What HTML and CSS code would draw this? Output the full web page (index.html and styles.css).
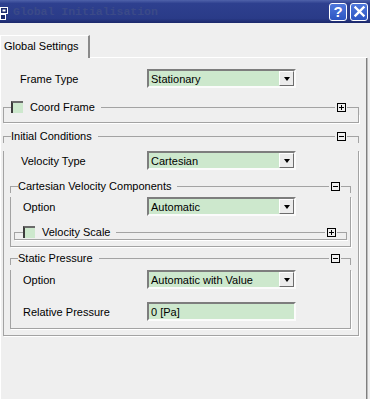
FILE: index.html
```html
<!DOCTYPE html>
<html lang="en">
<head>
  <meta charset="UTF-8">
  <title>Global Initialisation</title>
  <link rel="stylesheet" href="styles.css">
</head>
<body>
  <div class="window">
    <div class="titlebar">
      <svg class="app-icon" viewBox="0 0 10 16">
        <rect x="0.5" y="3.5" width="7" height="6" fill="#1c2a6b" stroke="#fff"/>
        <rect x="2.5" y="5.5" width="3" height="2" fill="#fff"/>
        <rect x="0.5" y="10.5" width="5" height="5" fill="#1c2a6b" stroke="#fff"/>
      </svg>
      <span class="title">Global Initialisation</span>
      <span class="tb-btn help">?</span>
      <span class="tb-btn">
        <svg viewBox="0 0 15 15" width="15" height="15">
          <path d="M3.5 3.5 L11.5 11.5 M11.5 3.5 L3.5 11.5" stroke="#fff" stroke-width="2.4" stroke-linecap="square"/>
        </svg>
      </span>
    </div>

    <div class="tabs">
      <div class="tab">Global Settings</div>
      <div class="tab-rest"></div>
    </div>

    <div class="panel">
      <div class="row top-row">
        <label>Frame Type</label>
        <div class="combo"><span class="value">Stationary</span><span class="arrow"></span></div>
      </div>

      <div class="group outer coord">
        <div class="group-head">
          <span class="corner-l"></span>
          <span class="check"></span>
          <span class="gtitle">Coord Frame</span>
          <span class="rule"></span>
          <span class="toggle plus"></span>
          <span class="corner-r"></span>
        </div>
        <div class="group-body empty"></div>
      </div>

      <div class="group outer initial">
        <div class="group-head">
          <span class="corner-l"></span>
          <span class="gtitle">Initial Conditions</span>
          <span class="rule"></span>
          <span class="toggle"></span>
          <span class="corner-r"></span>
        </div>
        <div class="group-body ic-body">
          <div class="row ic-row first">
            <label>Velocity Type</label>
            <div class="combo"><span class="value">Cartesian</span><span class="arrow"></span></div>
          </div>

          <div class="group inner cartesian">
            <div class="group-head">
              <span class="corner-l"></span>
              <span class="gtitle">Cartesian Velocity Components</span>
              <span class="rule"></span>
              <span class="toggle"></span>
              <span class="corner-r"></span>
            </div>
            <div class="group-body cv-body">
              <div class="row sub-row first">
                <label>Option</label>
                <div class="combo"><span class="value">Automatic</span><span class="arrow"></span></div>
              </div>
              <div class="group scale">
                <div class="group-head">
                  <span class="corner-l wide"></span>
                  <span class="check"></span>
                  <span class="gtitle">Velocity Scale</span>
                  <span class="rule"></span>
                  <span class="toggle plus"></span>
                  <span class="corner-r"></span>
                </div>
                <div class="group-body flat"></div>
              </div>
            </div>
          </div>

          <div class="group inner pressure">
            <div class="group-head">
              <span class="corner-l"></span>
              <span class="gtitle">Static Pressure</span>
              <span class="rule"></span>
              <span class="toggle"></span>
              <span class="corner-r"></span>
            </div>
            <div class="group-body sp-body">
              <div class="row sub-row first">
                <label>Option</label>
                <div class="combo"><span class="value">Automatic with Value</span><span class="arrow"></span></div>
              </div>
              <div class="row sub-row second">
                <label>Relative Pressure</label>
                <div class="combo field"><span class="value">0 [Pa]</span></div>
              </div>
            </div>
          </div>
        </div>
      </div>
    </div>
  </div>
</body>
</html>
```

FILE: styles.css
```css
body {
  margin: 0;
  font-family: "Liberation Sans", Arial, sans-serif;
  font-size: 11px;
  color: #000;
  background-color: #efefef;
}

.window {
  width: 370px;
  height: 399px;
  display: flex;
  flex-direction: column;
  overflow: hidden;
}

/* title bar */

.titlebar {
  flex: none;
  height: 23px;
  display: flex;
  align-items: center;
  padding-right: 2px;
  background: linear-gradient(#4f62aa, #2e408f 15%, #2a3b88 80%, #1b286a);
}

.app-icon {
  width: 10px;
  height: 16px;
  margin-right: 3px;
}

.title {
  flex: 1;
  font-family: "Liberation Mono", "Courier New", monospace;
  font-weight: bold;
  font-size: 11.5px;
  color: #3b4a88;
}

.tb-btn {
  box-sizing: border-box;
  width: 18px;
  height: 18px;
  margin-left: 3px;
  border: 1px solid #fff;
  border-radius: 3px;
  background: linear-gradient(#4f78dc, #2c55c2);
  display: flex;
  align-items: center;
  justify-content: center;
  color: #fff;
}

.help {
  font-weight: bold;
  font-size: 15px;
}

/* tab strip */

.tabs {
  flex: none;
  display: flex;
  height: 23px;
  margin-top: 12px;
}

.tab {
  box-sizing: border-box;
  width: 90px;
  padding: 4px 0 0 3px;
  line-height: 13px;
  border-top: 1px solid #fff;
  border-left: 1px solid #fff;
  border-right: 2px solid #8a8a8a;
}

.tab-rest {
  flex: 1;
  margin-right: 3px;
  border-bottom: 1px solid #fff;
}

.panel {
  flex: 1;
  margin-right: 3px;
  padding-top: 11px;
  border-left: 1px solid #fff;
  border-right: 1px solid #7f7f7f;
  box-shadow: 1px 0 0 #bdbdbd;
}

/* rows */

.row {
  display: flex;
  align-items: center;
  height: 19px;
}

.top-row { padding-left: 19px; }
.top-row label { width: 127px; }

.ic-row { padding-left: 17px; }
.ic-row label { width: 126px; }

.sub-row { padding-left: 12px; }
.sub-row label { width: 124px; }

.combo {
  box-sizing: border-box;
  width: 149px;
  height: 19px;
  display: flex;
  align-items: center;
  border: 2px solid;
  border-color: #7d7d7d #fbfbfb #fbfbfb #7d7d7d;
  background-color: #cde8cd;
}

.combo .value {
  flex: 1;
  padding-left: 2px;
}

.arrow {
  box-sizing: border-box;
  width: 15px;
  height: 15px;
  background-color: #ececec;
  border: 1px solid;
  border-color: #fff #6d6d6d #6d6d6d #fff;
  display: flex;
  align-items: center;
  justify-content: center;
}

.arrow::after {
  content: "";
  border-top: 4px solid #000;
  border-left: 3.5px solid transparent;
  border-right: 3.5px solid transparent;
}

/* group boxes */

.group-head {
  display: flex;
  height: 14px;
}

.corner-l,
.corner-r,
.rule {
  box-sizing: border-box;
  align-self: flex-end;
  height: 7px;
  border-top: 1px solid #a3a3a3;
}

.corner-l {
  width: 8px;
  border-left: 1px solid #a3a3a3;
}

.corner-l.wide { width: 9px; }

.corner-r {
  width: 12px;
  margin-left: 1px;
  border-right: 1px solid #a3a3a3;
}

.inner .corner-r,
.scale .corner-r { width: 10px; }

.rule {
  flex: 1;
  margin-right: 2px;
}

.gtitle {
  line-height: 14px;
  padding: 0 6px 0 0;
}

.check {
  box-sizing: border-box;
  width: 12px;
  height: 12px;
  margin-top: 1px;
  margin-right: 7px;
  background-color: #cde8cd;
  border-top: 2px solid #6a6a6a;
  border-left: 2px solid #3c3c3c;
}

.toggle {
  box-sizing: border-box;
  width: 9px;
  height: 9px;
  margin-top: 3px;
  border: 1px solid #000;
  display: flex;
  align-items: center;
  justify-content: center;
}

.toggle::before {
  content: "";
  width: 5px;
  height: 1px;
  background-color: #000;
}

.toggle.plus {
  position: relative;
}

.toggle.plus::after {
  content: "";
  position: absolute;
  left: 3px;
  top: 1px;
  width: 1px;
  height: 5px;
  background-color: #000;
}

.group-body {
  border: 1px solid #a3a3a3;
  border-top: none;
  box-shadow: 1px 1px 0 #fff;
}

.group-body.empty { height: 8px; }
.group-body.flat { height: 0; }

.outer {
  margin-left: 2px;
  margin-right: 7px;
}

.coord { margin-top: 12px; }
.initial { margin-top: 6px; }

.ic-body { padding-bottom: 6px; }
.ic-row.first { margin-top: 8px; }

.inner {
  margin-left: 6px;
  margin-right: 7px;
}

.cartesian { margin-top: 9px; }
.pressure { margin-top: 4px; }

.cv-body { padding-bottom: 6px; }
.cv-body .first { margin-top: 4px; }

.scale {
  margin: 9px 3px 0 3px;
}

.sp-body { padding-bottom: 7px; }
.sp-body .first { margin-top: 5px; }
.sp-body .second { margin-top: 13px; }
```
